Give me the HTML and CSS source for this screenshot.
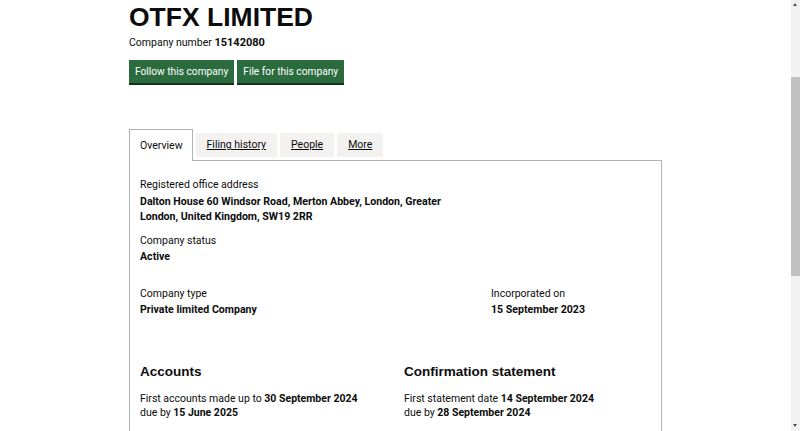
FILE: index.html
```html
<!DOCTYPE html>
<html lang="en">
<head>
<meta charset="utf-8">
<title>OTFX LIMITED overview</title>
<link rel="stylesheet" href="styles.css">
</head>
<body>
<main class="page">
  <h1 class="heading">OTFX LIMITED</h1>
  <p class="company-number">Company number <strong>15142080</strong></p>
  <div class="actions">
    <a class="button" href="#">Follow this company</a>
    <a class="button" href="#">File for this company</a>
  </div>

  <ul class="tabs">
    <li class="tab tab-active">Overview</li>
    <li class="tab"><a href="#">Filing history</a></li>
    <li class="tab"><a href="#">People</a></li>
    <li class="tab"><a href="#">More</a></li>
  </ul>

  <section class="panel">
    <dl class="field">
      <dt>Registered office address</dt>
      <dd class="address">Dalton House 60 Windsor Road, Merton Abbey, London, Greater London, United Kingdom, SW19 2RR</dd>
    </dl>
    <dl class="field field-status">
      <dt>Company status</dt>
      <dd>Active</dd>
    </dl>
    <div class="row-type">
      <dl class="field">
        <dt>Company type</dt>
        <dd>Private limited Company</dd>
      </dl>
      <dl class="field">
        <dt>Incorporated on</dt>
        <dd>15 September 2023</dd>
      </dl>
    </div>
    <div class="row-filing">
      <div class="filing">
        <h2 class="filing-title">Accounts</h2>
        <p class="filing-text">First accounts made up to <strong>30 September 2024</strong><br>due by <strong>15 June 2025</strong></p>
      </div>
      <div class="filing">
        <h2 class="filing-title">Confirmation statement</h2>
        <p class="filing-text">First statement date <strong>14 September 2024</strong><br>due by <strong>28 September 2024</strong></p>
      </div>
    </div>
  </section>
</main>
<div class="scrollbar">
  <span class="arrow arrow-up"></span>
  <span class="thumb"></span>
  <span class="arrow arrow-down"></span>
</div>
</body>
</html>
```

FILE: styles.css
```css
html, body {
  margin: 0;
  padding: 0;
  height: 100%;
  overflow: hidden;
  background: #ffffff;
}
body {
  font-family: Roboto, "Liberation Sans", Arial, sans-serif;
  font-size: 10px;
  color: #0b0c0c;
}
.page {
  padding: 2px 0 0 129px;
  width: 533px;
}
.heading {
  margin: 0;
  font-family: "Liberation Sans", Arial, sans-serif;
  font-weight: 700;
  font-size: 26.5px;
  line-height: 30px;
}
.company-number {
  margin: 3px 0 0;
  font-size: 10.5px;
  line-height: 16px;
}
.company-number strong {
  font-size: 11px;
}
.actions {
  display: flex;
  gap: 3px;
  margin-top: 9px;
}
.button {
  display: block;
  background: #2b6c3f;
  color: #ffffff;
  text-decoration: none;
  font-size: 10.2px;
  line-height: 23px;
  height: 23px;
  padding: 0 6px;
  box-shadow: 0 2px 0 #12321d;
}
.tabs {
  list-style: none;
  margin: 46px 0 0;
  padding: 0;
  display: flex;
  align-items: flex-start;
  gap: 3px;
}
.tab {
  margin-top: 4px;
  height: 24px;
  line-height: 24px;
  padding: 0 11px;
  background: #f3f2f1;
  font-size: 10.5px;
}
.tab a { color: #0b0c0c; }
.tab-active {
  margin-top: 0;
  height: 31px;
  line-height: 31px;
  padding: 0 9px 0 10px;
  background: #ffffff;
  border: 1px solid #b1b4b6;
  border-bottom: 0;
  margin-bottom: -1px;
  position: relative;
  z-index: 1;
}
.panel {
  border: 1px solid #b1b4b6;
  padding: 16px 10px 40px;
  height: 400px;
}
.field {
  margin: 0;
}
.field dt {
  font-size: 10.5px;
  line-height: 16px;
}
.field dd {
  margin: 0;
  font-weight: 700;
  font-size: 10.6px;
  line-height: 16px;
}
.field .address {
  line-height: 14.5px;
  width: 320px;
  margin-top: 2px;
}
.field-status {
  margin-top: 9px;
}
.row-type {
  display: grid;
  grid-template-columns: 351px 1fr;
  margin-top: 21px;
}
.row-filing {
  display: grid;
  grid-template-columns: 264px 1fr;
  margin-top: 45px;
}
.filing-title {
  margin: 0;
  font-family: "Liberation Sans", Arial, sans-serif;
  font-size: 13.5px;
  line-height: 18px;
  font-weight: 700;
}
.filing-text {
  margin: 11px 0 0;
  font-size: 10.5px;
  line-height: 14px;
}
.scrollbar {
  position: fixed;
  top: 0;
  right: 0;
  width: 9px;
  height: 431px;
  background: #f1f1f1;
}
.thumb {
  position: absolute;
  left: 0;
  right: 0;
  top: 77px;
  height: 199px;
  background: #c1c1c1;
}
.arrow {
  position: absolute;
  left: 2px;
  width: 0;
  height: 0;
  border-left: 2.5px solid transparent;
  border-right: 2.5px solid transparent;
}
.arrow-up {
  top: 3px;
  border-bottom: 3px solid #505050;
}
.arrow-down {
  bottom: 4px;
  border-top: 3px solid #505050;
}
```
